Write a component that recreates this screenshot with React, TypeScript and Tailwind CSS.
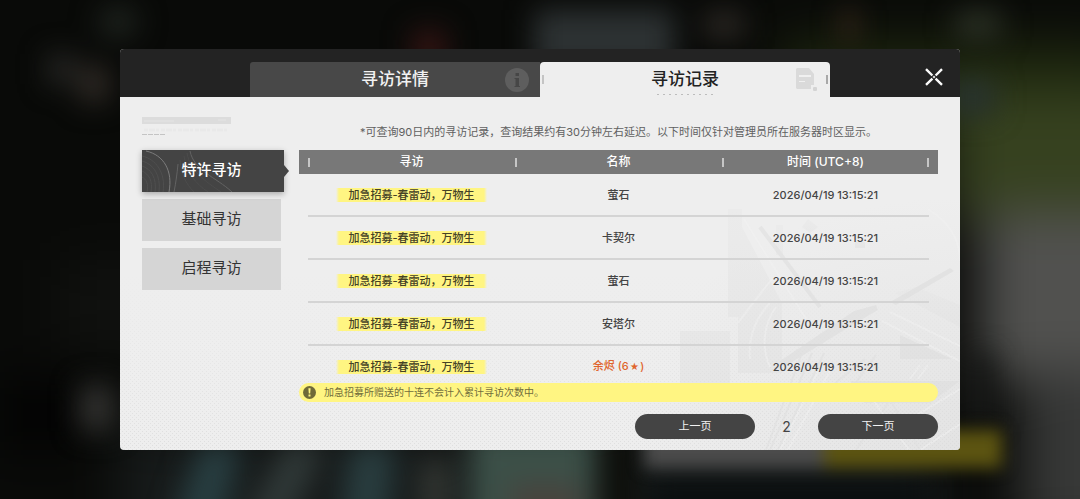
import { useState } from "react";

type RecordRow = { banner: string; name: string; rarity?: number; time: string };

const BANNER = "加急招募-春雷动，万物生";
const TIME = "2026/04/19 13:15:21";

const rows: RecordRow[] = [
  { banner: BANNER, name: "萤石", time: TIME },
  { banner: BANNER, name: "卡契尔", time: TIME },
  { banner: BANNER, name: "萤石", time: TIME },
  { banner: BANNER, name: "安塔尔", time: TIME },
  { banner: BANNER, name: "余烬", rarity: 6, time: TIME },
];

const categories = ["特许寻访", "基础寻访", "启程寻访"];

function Backdrop() {
  return (
    <svg
      className="absolute inset-0 h-full w-full"
      viewBox="0 0 1080 499"
      preserveAspectRatio="none"
      aria-hidden="true"
    >
      <defs>
        <filter
          id="soft"
          x="-100"
          y="-100"
          width="1280"
          height="699"
          filterUnits="userSpaceOnUse"
          colorInterpolationFilters="sRGB"
        >
          <feGaussianBlur stdDeviation="14" />
        </filter>
        <filter
          id="softer"
          x="-100"
          y="-100"
          width="1280"
          height="699"
          filterUnits="userSpaceOnUse"
          colorInterpolationFilters="sRGB"
        >
          <feGaussianBlur stdDeviation="26" />
        </filter>
        <filter
          id="crisp"
          x="-100"
          y="-100"
          width="1280"
          height="699"
          filterUnits="userSpaceOnUse"
          colorInterpolationFilters="sRGB"
        >
          <feGaussianBlur stdDeviation="8" />
        </filter>
      </defs>
      <g filter="url(#softer)">
        <rect x="-100" y="-100" width="1280" height="699" fill="#090a08" />
        <rect x="60" y="260" width="110" height="90" fill="#10110f" />
        <rect x="120" y="430" width="820" height="140" fill="#171b1b" />
        <rect x="780" y="40" width="340" height="80" fill="#1d260e" />
        <rect x="950" y="90" width="240" height="130" fill="#36411f" />
        <rect x="980" y="210" width="220" height="170" fill="#51514f" />
        <rect x="1020" y="370" width="160" height="170" fill="#373837" />
        <rect x="0" y="380" width="80" height="70" fill="#020202" />
      </g>
      <g filter="url(#soft)">
        <ellipse cx="118" cy="22" rx="20" ry="16" fill="#1f241f" />
        <rect x="48" y="54" width="26" height="30" fill="#282826" />
        <rect x="80" y="66" width="28" height="36" fill="#332d28" />
        <rect x="80" y="385" width="34" height="46" fill="#333331" />
        <rect x="534" y="10" width="140" height="60" fill="#2d3233" />
        <rect x="412" y="30" width="34" height="40" fill="#341413" />
        <rect x="704" y="12" width="40" height="26" fill="#2d2925" />
        <rect x="955" y="12" width="46" height="26" fill="#2c3226" />
        <rect x="842" y="10" width="14" height="30" fill="#402c1f" />
        <rect x="950" y="80" width="44" height="34" fill="#283230" />
        <rect x="965" y="355" width="28" height="70" fill="#171817" />
        <path d="M200 445h42l-20 80h-50z" fill="#283e41" />
        <path d="M285 445h42l-40 80h-44z" fill="#303938" />
        <path d="M350 445h46l-8 80h-48z" fill="#293d3f" />
        <rect x="470" y="430" width="125" height="100" fill="#3c5048" />
        <rect x="422" y="460" width="26" height="60" fill="#363a35" />
        <rect x="510" y="484" width="70" height="40" fill="#48433d" />
        <rect x="600" y="430" width="36" height="100" fill="#0d0e0a" />
        <rect x="650" y="480" width="280" height="60" fill="#0a0e0f" />
      </g>
      <g filter="url(#crisp)">
        <rect x="644" y="430" width="180" height="38" fill="#4c4c4c" />
        <rect x="824" y="430" width="178" height="38" fill="#5c5411" />
      </g>
    </svg>
  );
}

function PanelArt() {
  return (
    <svg
      className="pointer-events-none absolute inset-0 h-full w-full"
      viewBox="0 0 840 353"
      preserveAspectRatio="none"
      aria-hidden="true"
    >
      <defs>
        <pattern id="weave" width="4" height="4" patternUnits="userSpaceOnUse">
          <rect width="1" height="1" fill="#dadada" />
          <rect x="2" y="2" width="1" height="1" fill="#dadada" />
        </pattern>
        <linearGradient id="weaveFade" x1="0" y1="0" x2="0" y2="1">
          <stop offset="0.5" stopColor="#fff" stopOpacity="0" />
          <stop offset="1" stopColor="#fff" stopOpacity="0.8" />
        </linearGradient>
        <mask id="weaveMask">
          <rect width="840" height="353" fill="url(#weaveFade)" />
        </mask>
        <radialGradient id="haze" cx="1" cy="1" r="1">
          <stop offset="0" stopColor="#e2e2e2" stopOpacity="0.9" />
          <stop offset="1" stopColor="#e2e2e2" stopOpacity="0" />
        </radialGradient>
        <linearGradient id="shade" x1="0" y1="0" x2="0" y2="1">
          <stop offset="0" stopColor="#e4e4e4" stopOpacity="0.3" />
          <stop offset="1" stopColor="#e4e4e4" stopOpacity="0.8" />
        </linearGradient>
      </defs>
      <rect x="500" y="100" width="340" height="253" fill="url(#haze)" />
      <g fill="url(#shade)">
        <path d="M608 112h14v108h-14zM622 130l40 76v70h-44v-50z" />
        <path d="M560 234h50v60h-50zM656 128h7v30h-7z" />
        <path d="M688 122l10 8-8 6-8-6zM735 145h10v6h-10z" />
        <path d="M775 196l65 34v-22l-44-18z" />
      </g>
      <g fill="#e0e0e0" opacity="0.75">
        <path d="M780 238l52 24h-52zM730 284h110l-30 22h-66z" />
        <path d="M660 264l74-50 22-6 2 5-24 14-70 43z" />
        <path d="M770 205l60-34 4 3-58 34z" />
      </g>
      <g fill="none" stroke="#e2e2e2" strokeWidth="2" opacity="0.8">
        <path d="M704 256l-46 97M692 256l-42 97M682 256l-36 97" />
        <path d="M745 262l-32 26M756 258l-22 30M736 353l34-50 30 50" />
        <path d="M640 130l60 80" strokeWidth="4" />
      </g>
      <g fill="none" stroke="#f1f1f1" strokeWidth="2" opacity="0.5">
        <path d="M624 122l62 100M618 226q10-14 34-44M650 206a70 70 0 0 0-20 56" />
        <path d="M656 210a60 60 0 0 0-6 60M700 270l-40 83M712 270l-44 83" />
        <path d="M770 215l70 34M762 224l78 40M745 292l44 61M800 353l40-26M760 340l80-48" />
        <path d="M808 112q32 20 32 52M790 282l10-14M798 282l10-14" />
      </g>
      <rect width="840" height="353" fill="url(#weave)" mask="url(#weaveMask)" />
    </svg>
  );
}

function InfoIcon() {
  return (
    <svg width="24" height="24" viewBox="0 0 24 24" aria-hidden="true">
      <circle cx="12" cy="12" r="12" fill="#5e5e5e" />
      <path d="M10.500 5h3.500v3h-3.500zM9.500 10H14v8h1v1H9.500v-1h1v-7h-1z" fill="#464646" />
    </svg>
  );
}

function RecordIcon() {
  return (
    <svg width="21" height="23" viewBox="0 0 21 23" aria-hidden="true">
      <path d="M1 0h12l5 6v11h-3v4H1l-1-1V1z" fill="#dadada" />
      <path d="M3 7h12v2H3zM3 13h6v1H3z" fill="#f0f0f0" />
      <rect x="17" y="19" width="4" height="4" rx="1" fill="#d4d4d4" />
    </svg>
  );
}

function CloseIcon() {
  return (
    <svg width="18" height="18" viewBox="0 0 18 18" aria-hidden="true">
      <path
        d="M1 1.2l6.4 6.3M10.6 10.6l6.4 6.2M17 1.2l-6.4 6.3M7.4 10.6L1 16.8"
        stroke="#fafafa"
        strokeWidth="2.4"
        fill="none"
      />
      <path d="M9 7.5L10.500 9 9 10.500 7.500 9z" fill="#e8e8e8" />
    </svg>
  );
}

function AlertIcon() {
  return (
    <svg width="13" height="13" viewBox="0 0 13 13" aria-hidden="true">
      <circle cx="6.500" cy="6.500" r="6.500" fill="#6f6a38" />
      <path d="M5.400 2.300h2.200l-.4 5.200H5.800zM5.500 8.600h2v2h-2z" fill="#fff582" />
    </svg>
  );
}

function SideMark() {
  return (
    <svg width="90" height="20" viewBox="0 0 90 20" aria-hidden="true">
      <rect x="0" y="0" width="89" height="7" fill="#dcdcdc" />
      <path d="M2 4h30M76 3h8" stroke="#e4e4e4" strokeWidth="1" />
      <path d="M2 13h84" stroke="#e9e9e9" strokeWidth="3" strokeDasharray="4 1 6 1 3 2" />
      <path d="M0 17.500h23" stroke="#c4c4c4" strokeWidth="1" strokeDasharray="5 1" />
    </svg>
  );
}

function ContourLines() {
  return (
    <svg
      className="absolute inset-0 h-full w-full"
      viewBox="0 0 142 42"
      preserveAspectRatio="none"
      fill="none"
      aria-hidden="true"
    >
      <path d="M4 1c18 4 27 20 23 41" stroke="#7c7c7c" />
      <path
        d="M0 6c14 3 24 17 21 36M0 11c12 3 19 15 17 31M0 16c9 3 15 12 13 26M0 21c7 3 11 10 9 21M0 27c4 2 7 7 5 15"
        stroke="#4f4f4f"
      />
      <path d="M36 14c-1 10-2 18-4 28M48 1c4 20 26 26 42 41" stroke="#636363" />
      <path
        d="M38 10c1 14 6 24 14 32M42 6c2 16 12 28 24 36M45 3c3 18 18 28 34 39"
        stroke="#4c4c4c"
      />
    </svg>
  );
}

export default function App() {
  const [category, setCategory] = useState(0);

  return (
    <main className="relative flex min-h-screen items-center overflow-hidden bg-[#080907] px-[120px] font-[Inter,'Noto_Sans_CJK_SC',sans-serif]">
      <Backdrop />
      <section className="relative flex-1 overflow-hidden rounded-[4px] bg-[#eeeeee]">
        <header className="grid h-12 grid-cols-[130px_1fr_1fr_130px] items-end bg-[#232323]">
          <button
            type="button"
            className="relative col-start-2 h-[35px] rounded-tl-[3px] bg-[#484848] text-[17px] font-medium text-[#f2f2f2]"
          >
            寻访详情
            <span className="absolute right-[11px] top-[6px]">
              <InfoIcon />
            </span>
          </button>
          <button
            type="button"
            className="relative h-[35px] rounded-t-[4px] bg-[#eeeeee] text-[17px] font-medium text-[#222222]"
          >
            寻访记录
            <span className="absolute left-[2px] top-[13px] h-[9px] w-[2px] bg-[#c4c4c4]" />
            <span className="absolute right-[2px] top-[13px] h-[9px] w-[2px] bg-[#a8a8a8]" />
            <span className="absolute inset-x-0 bottom-[2px] mx-auto h-px w-[56px] bg-[repeating-linear-gradient(90deg,#bcbcbc_0_2px,transparent_2px_6px)]" />
            <span className="absolute right-[13px] top-[6px]">
              <RecordIcon />
            </span>
          </button>
          <button
            type="button"
            aria-label="关闭"
            className="mr-[17px] mb-[11px] justify-self-end"
          >
            <CloseIcon />
          </button>
        </header>

        <div className="relative">
          <PanelArt />
          <div className="relative grid grid-cols-[157px_1fr] pt-[20px] pr-[22px] pb-[11px] pl-[22px]">
            <nav>
              <SideMark />
              <ul className="mt-[13px] flex flex-col gap-[7px]">
                {categories.map((label, i) => (
                  <li key={label}>
                    {i === category ? (
                      <button
                        type="button"
                        aria-current="true"
                        className="relative block h-[42px] w-[142px] bg-[#444444] pr-[3px] pb-[2px] text-[15px] font-medium text-white shadow-[0_2px_6px_rgba(0,0,0,0.3)]"
                      >
                        <ContourLines />
                        <span className="relative">{label}</span>
                        <svg
                          className="absolute -right-[5px] top-[15px]"
                          width="5"
                          height="12"
                          viewBox="0 0 5 12"
                          aria-hidden="true"
                        >
                          <path d="M0 0l5 6-5 6z" fill="#444" />
                        </svg>
                      </button>
                    ) : (
                      <button
                        type="button"
                        onClick={() => setCategory(i)}
                        className="block h-[42px] w-[139px] bg-[#d5d5d5] pb-[2px] text-[15px] text-[#333333]"
                      >
                        {label}
                      </button>
                    )}
                  </li>
                ))}
              </ul>
            </nav>

            <div>
              <p className="mt-[5px] mb-[8px] text-center text-[11px] leading-[20px] text-[#606060]">
                *可查询90日内的寻访记录，查询结果约有30分钟左右延迟。以下时间仅针对管理员所在服务器时区显示。
              </p>

              <div className="h-[233px] overflow-hidden px-[9px]">
                <table className="w-full table-fixed border-separate border-spacing-0 text-center">
                  <thead>
                    <tr className="h-6 text-[12px] leading-[16px] text-white">
                      {["寻访", "名称", "时间 (UTC+8)"].map((title, i) => (
                        <th
                          key={title}
                          className="relative bg-[#787878] p-0 font-medium first:shadow-[-9px_0_0_#787878] last:shadow-[9px_0_0_#787878]"
                        >
                          <span className="absolute left-0 top-[8px] h-[9px] w-[2px] bg-[#c6c6c6]" />
                          {title}
                          {i === 2 && (
                            <span className="absolute right-0 top-[8px] h-[9px] w-[2px] bg-[#c6c6c6]" />
                          )}
                        </th>
                      ))}
                    </tr>
                  </thead>
                  <tbody className="[&_td]:border-b-2 [&_td]:border-[#d4d4d4] [&_td]:p-0">
                    {rows.map((row, i) => (
                      <tr
                        key={i}
                        className="h-[43px] text-[11px] leading-[14px] font-medium text-[#444444]"
                      >
                        <td>
                          <span className="inline-block bg-[linear-gradient(90deg,#fff58200,#fff582_3px,#fff582_calc(100%-3px),#fff58200)] px-[12px] text-[#454226]">
                            {row.banner}
                          </span>
                        </td>
                        <td className={row.rarity ? "text-[#e0642c]" : ""}>
                          {row.name}
                          {row.rarity && (
                            <>
                              {" "}({row.rarity}
                              <span className="mx-px text-[9px]">★</span>)
                            </>
                          )}
                        </td>
                        <td>{row.time}</td>
                      </tr>
                    ))}
                  </tbody>
                </table>
              </div>

              <p className="flex h-[19px] items-center gap-2 rounded-full bg-[#fff582] pl-[4px] text-[10px] leading-[14px] text-[#716d3c]">
                <AlertIcon />
                <span className="pb-[2px]">加急招募所赠送的十连不会计入累计寻访次数中。</span>
              </p>

              <div className="mt-[12px] flex items-center justify-end">
                <button
                  type="button"
                  className="h-[25px] w-[120px] rounded-full bg-[#444444] text-[11px] text-[#f2f2f2]"
                >
                  上一页
                </button>
                <span className="w-[63px] text-center text-[14px] leading-[20px] text-[#444444]">
                  2
                </span>
                <button
                  type="button"
                  className="h-[25px] w-[120px] rounded-full bg-[#444444] text-[11px] text-[#f2f2f2]"
                >
                  下一页
                </button>
              </div>
            </div>
          </div>
        </div>
      </section>
    </main>
  );
}
